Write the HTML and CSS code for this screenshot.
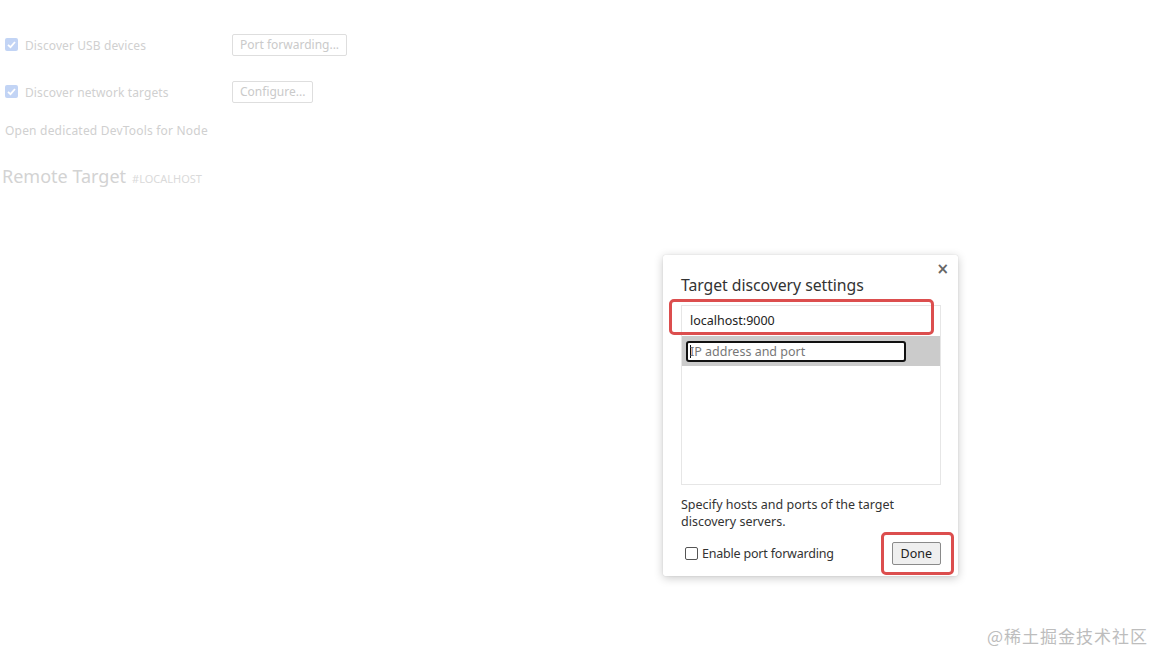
FILE: index.html
```html
<!DOCTYPE html>
<html>
<head>
<meta charset="utf-8">
<link rel="stylesheet" href="styles.css">
</head>
<body>
<div class="page">
  <div class="row row-usb">
    <label class="opt">
      <span class="cb-on"><svg viewBox="0 0 13 13" width="13" height="13"><path d="M3 6.8 L5.5 9.2 L10 4" fill="none" stroke="#fff" stroke-width="1.8"/></svg></span>
      <span class="opt-label">Discover USB devices</span>
    </label>
    <span class="bg-btn">Port forwarding...</span>
  </div>
  <div class="row row-net">
    <label class="opt">
      <span class="cb-on"><svg viewBox="0 0 13 13" width="13" height="13"><path d="M3 6.8 L5.5 9.2 L10 4" fill="none" stroke="#fff" stroke-width="1.8"/></svg></span>
      <span class="opt-label">Discover network targets</span>
    </label>
    <span class="bg-btn">Configure...</span>
  </div>
  <div class="node-link">Open dedicated DevTools for Node</div>
  <div class="remote"><span class="remote-title">Remote Target</span><span class="remote-sub">#LOCALHOST</span></div>
</div>

<div class="dialog">
  <div class="close">×</div>
  <div class="title">Target discovery settings</div>
  <div class="list">
    <div class="item">localhost:9000</div>
    <div class="item item-edit"><div class="input"><span class="caret"></span><span class="ph">IP address and port</span></div></div>
  </div>
  <div class="note">Specify hosts and ports of the target discovery servers.</div>
  <div class="footer">
    <label class="pf"><span class="cb-off"></span><span>Enable port forwarding</span></label>
    <span class="done">Done</span>
  </div>
  <div class="mark mark-list"></div>
  <div class="mark mark-done"></div>
</div>

<div class="watermark">@稀土掘金技术社区</div>
</body>
</html>
```

FILE: styles.css
```css
html, body {
  margin: 0;
  padding: 0;
  background: #fff;
}
body {
  width: 1153px;
  height: 653px;
  position: relative;
  overflow: hidden;
  font-family: "Noto Sans", "Open Sans", sans-serif;
}
.page {
  padding: 34px 0 0 0;
  color: #d0d0d0;
  font-size: 12px;
}
.row {
  display: flex;
  align-items: center;
  height: 22px;
}
.row-net {
  margin-top: 25px;
}
.opt {
  display: flex;
  align-items: center;
  width: 232px;
  padding-left: 5px;
  box-sizing: border-box;
}
.cb-on {
  width: 13px;
  height: 13px;
  border-radius: 2px;
  background: #c2d4f5;
  display: inline-block;
  margin-right: 7px;
  margin-top: -2px;
}
.cb-on svg { display: block; }
.opt-label {
  letter-spacing: 0.1px;
}
.bg-btn {
  box-sizing: border-box;
  height: 22px;
  line-height: 20px;
  padding: 0 7px;
  border: 1px solid #dedede;
  border-radius: 2px;
  color: #cacaca;
}
.node-link {
  margin: 19px 0 0 5px;
  line-height: 17px;
  letter-spacing: 0.2px;
}
.remote {
  margin: 25px 0 0 2px;
  display: flex;
  align-items: baseline;
  gap: 6px;
}
.remote-title {
  font-size: 18px;
  color: #d3d3d3;
}
.remote-sub {
  font-size: 11px;
  color: #dadada;
  letter-spacing: 0;
}

.dialog {
  position: absolute;
  left: 663px;
  top: 255px;
  width: 295px;
  height: 321px;
  box-sizing: border-box;
  background: #fff;
  border-radius: 2px;
  box-shadow: 0 2px 10px rgba(0,0,0,0.22), 0 0 1px rgba(0,0,0,0.2);
  padding: 20px 18px 0 18px;
  color: #333;
}
.close {
  position: absolute;
  right: 9px;
  top: 5px;
  font-size: 15px;
  color: #666;
  font-family: "DejaVu Sans", sans-serif;
  font-weight: bold;
}
.title {
  font-size: 15.8px;
  line-height: 20px;
  color: #333;
  letter-spacing: -0.05px;
}
.list {
  margin-top: 10px;
  width: 260px;
  height: 180px;
  box-sizing: border-box;
  border: 1px solid #e6e6e6;
  font-size: 12.5px;
}
.item {
  height: 30px;
  line-height: 29px;
  padding-left: 8px;
  color: #222;
}
.item-edit {
  background: #cbcbcb;
  padding-left: 4px;
  display: flex;
  align-items: center;
}
.input {
  width: 220px;
  height: 21px;
  box-sizing: border-box;
  border: 2px solid #111;
  border-radius: 3px;
  background: #fff;
  display: flex;
  align-items: center;
  padding-left: 2px;
  line-height: 17px;
}
.caret {
  width: 1px;
  height: 13px;
  background: #111;
}
.ph {
  color: #777;
  margin-left: -1px;
}
.note {
  margin-top: 11px;
  font-size: 12.5px;
  line-height: 17px;
  color: #333;
  width: 230px;
}
.footer {
  margin-top: 12px;
  display: flex;
  align-items: center;
  justify-content: space-between;
  padding-left: 4px;
  padding-right: 0;
  width: 260px;
  box-sizing: border-box;
}
.pf {
  display: flex;
  align-items: center;
  font-size: 12.5px;
  color: #333;
  letter-spacing: -0.2px;
}
.cb-off {
  width: 11px;
  height: 11px;
  border: 1px solid #555;
  border-radius: 2px;
  margin-right: 4px;
  display: inline-block;
}
.done {
  box-sizing: border-box;
  height: 23px;
  line-height: 21px;
  padding: 0 8px;
  font-size: 12.5px;
  border: 1px solid #8a8a8a;
  border-radius: 2px;
  background: #efefef;
  color: #222;
}
.mark {
  position: absolute;
  border: 3px solid #dc4e4e;
  border-radius: 5px;
  box-sizing: border-box;
}
.mark-list {
  left: 6px;
  top: 44px;
  width: 265px;
  height: 36px;
}
.mark-done {
  left: 218px;
  top: 277px;
  width: 73px;
  height: 43px;
}

.watermark {
  position: absolute;
  left: 987px;
  top: 623px;
  font-size: 17px;
  color: #bdbdbd;
  font-family: "Noto Sans CJK SC", sans-serif;
  letter-spacing: 1px;
}
```
